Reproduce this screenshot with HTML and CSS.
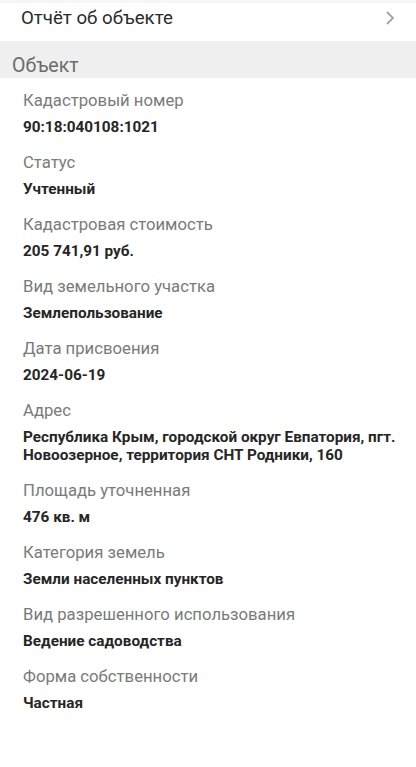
FILE: index.html
```html
<!DOCTYPE html>
<html lang="ru">
<head>
<meta charset="utf-8">
<link rel="stylesheet" href="styles.css">
</head>
<body>
<div class="report-row">
  <span class="report-title">Отчёт об объекте</span>
  <svg class="chevron" width="12" height="16" viewBox="0 0 12 16"><path d="M3 2 L9 8 L3 14" fill="none" stroke="#a3a3a3" stroke-width="1.8"/></svg>
</div>
<div class="section-head">Объект</div>
<div class="fields">
  <div class="field"><div class="label">Кадастровый номер</div><div class="value">90:18:040108:1021</div></div>
  <div class="field"><div class="label">Статус</div><div class="value">Учтенный</div></div>
  <div class="field"><div class="label">Кадастровая стоимость</div><div class="value">205 741,91 руб.</div></div>
  <div class="field"><div class="label">Вид земельного участка</div><div class="value">Землепользование</div></div>
  <div class="field"><div class="label">Дата присвоения</div><div class="value">2024-06-19</div></div>
  <div class="field"><div class="label">Адрес</div><div class="value">Республика Крым, городской округ Евпатория, пгт. Новоозерное, территория СНТ Родники, 160</div></div>
  <div class="field"><div class="label">Площадь уточненная</div><div class="value">476 кв. м</div></div>
  <div class="field"><div class="label">Категория земель</div><div class="value">Земли населенных пунктов</div></div>
  <div class="field"><div class="label">Вид разрешенного использования</div><div class="value">Ведение садоводства</div></div>
  <div class="field"><div class="label">Форма собственности</div><div class="value">Частная</div></div>
</div>
</body>
</html>
```

FILE: styles.css
```css
html, body {
  margin: 0;
  padding: 0;
  background: #ffffff;
  font-family: Roboto, "Noto Sans", sans-serif;
}
.report-row {
  height: 41px;
  display: flex;
  align-items: center;
  justify-content: space-between;
  padding: 0 20px 8px 21px;
  box-sizing: border-box;
  border-top: 3px solid #f6f6f6;
}
.report-title {
  font-size: 18.7px;
  color: #2b2b2b;
}
.chevron {
  display: block;
}
.section-head {
  height: 37px;
  background: #efefef;
  box-sizing: border-box;
  padding: 14px 0 0 12px;
  font-size: 19.5px;
  line-height: 22px;
  color: #6b6b6b;
}
.fields {
  padding: 12px 14px 0 23px;
  display: flex;
  flex-direction: column;
  gap: 16.5px;
}
.label {
  font-size: 16.7px;
  line-height: 21px;
  color: #7a7a7a;
}
.value {
  margin-top: 6.5px;
  font-size: 15.3px;
  line-height: 18px;
  font-weight: 700;
  color: #262626;
}
```
